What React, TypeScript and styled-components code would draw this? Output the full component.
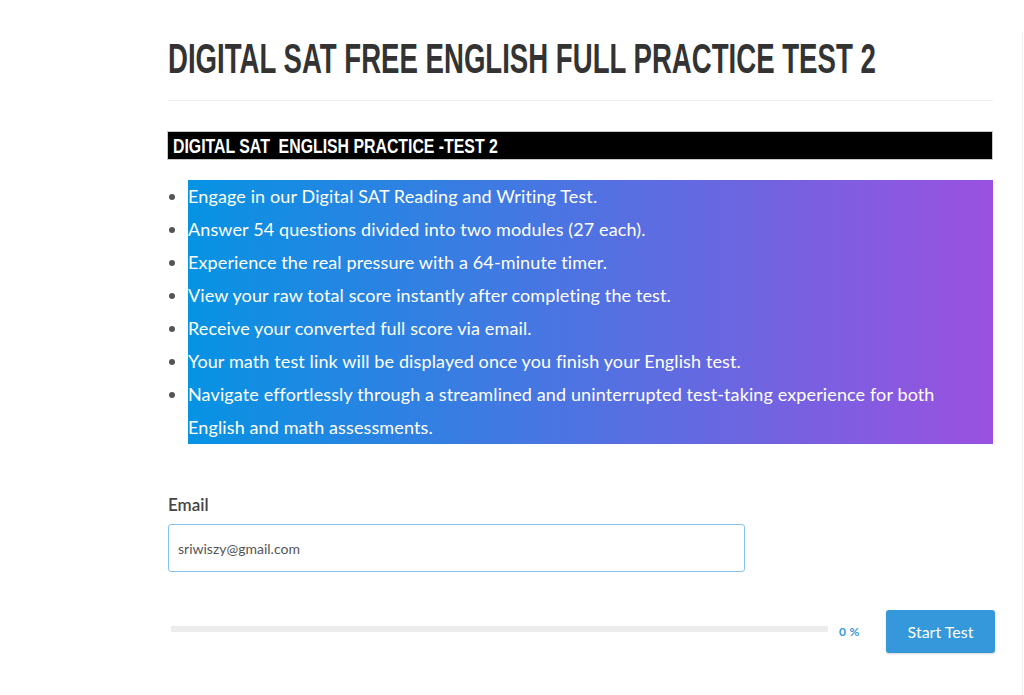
import React from "react";
import styled, { createGlobalStyle } from "styled-components";

const GlobalStyle = createGlobalStyle`
  html, body {
    margin: 0;
    padding: 0;
    background: #ffffff;
  }
  body {
    font-family: Lato, "Open Sans", "Liberation Sans", sans-serif;
    color: #555555;
    overflow: hidden;
  }
  * { box-sizing: border-box; }
`;

const Page = styled.div`
  display: flex;
  min-height: 100vh;
`;

const Main = styled.main`
  width: 825px;
  margin-left: 168px;
  flex: none;
`;

const Sidebar = styled.aside`
  margin-left: 29px;
  margin-top: 32px;
  border-left: 1px solid #efefef;
  flex: 1;
`;

const Header = styled.header`
  padding-top: 39px;
  padding-bottom: 12px;
  border-bottom: 1px solid #eeeeee;
`;

/* Tall condensed display type: narrow size, stretched vertically around the baseline */
const Tall = styled.span<{ $stretch: number; $baseline: number }>`
  display: inline-block;
  white-space: nowrap;
  transform: scaleY(${(p) => p.$stretch});
  transform-origin: 0 ${(p) => p.$baseline}px;
`;

const Title = styled.h1`
  margin: 0;
  font-family: "Liberation Sans", Arial, sans-serif;
  font-weight: 700;
  font-size: 27.6px;
  line-height: 49px;
  color: #333333;
  white-space: nowrap;
`;

const Content = styled.section`
  padding-top: 30px;
`;

const SectionBar = styled.h2`
  margin: 0 0 0 -1px;
  background: #000000;
  border: 1px solid #c8c8c8;
  padding: 5px 5px 0;
  font-family: "Liberation Sans", Arial, sans-serif;
  font-weight: 700;
  font-size: 15.85px;
  line-height: 22px;
  color: #ffffff;
  white-space: nowrap;
`;

const FeatureList = styled.ul`
  margin: 20px 0 0 20px;
  padding: 0;
  background: linear-gradient(90deg, #0693e3 0%, #9b51e0 100%);
`;

const Feature = styled.li`
  list-style: disc outside;
  font-size: 18px;
  letter-spacing: 0.12px;
  line-height: 33px;
  color: #ffffff;

  &::marker {
    color: #555555;
  }
`;

const Form = styled.form`
  margin-top: 49px;
  display: flex;
  flex-direction: column;
`;

const Label = styled.label`
  font-size: 17px;
  line-height: 24px;
  font-weight: 600;
  color: #454545;
`;

const EmailInput = styled.input`
  margin-top: 7px;
  width: 577px;
  height: 48px;
  padding: 0 9px;
  border: 1px solid #86c2ea;
  border-radius: 3px;
  font-family: Lato, "Open Sans", sans-serif;
  font-size: 14px;
  color: #555555;
  background: #ffffff;
  outline: none;
`;

const ActionRow = styled.div`
  margin-top: 38px;
  width: 827px;
  display: flex;
  align-items: center;
`;

const ProgressTrack = styled.div`
  flex: 1;
  margin-left: 3px;
  margin-bottom: 6px;
  height: 6px;
  background: #ececec;
`;

const Percent = styled.span`
  margin-left: 11px;
  width: 20px;
  font-size: 12px;
  font-weight: 700;
  letter-spacing: 0.3px;
  color: #3b97d8;
  white-space: nowrap;
`;

const StartButton = styled.button`
  margin-left: 27px;
  width: 109px;
  height: 43px;
  border: none;
  border-radius: 3px;
  background: #3498db;
  box-shadow: 0 1px 2px rgba(0, 0, 0, 0.18);
  color: #ffffff;
  font-family: Lato, "Open Sans", sans-serif;
  font-size: 16px;
  cursor: pointer;
`;

const features = [
  "Engage in our Digital SAT Reading and Writing Test.",
  "Answer 54 questions divided into two modules (27 each).",
  "Experience the real pressure with a 64-minute timer.",
  "View your raw total score instantly after completing the test.",
  "Receive your converted full score via email.",
  "Your math test link will be displayed once you finish your English test.",
  "Navigate effortlessly through a streamlined and uninterrupted test-taking experience for both English and math assessments.",
];

export default function App() {
  return (
    <>
      <GlobalStyle />
      <Page>
        <Main>
          <Header>
            <Title>
              <Tall $stretch={1.52} $baseline={34}>
                DIGITAL SAT FREE ENGLISH FULL PRACTICE TEST 2
              </Tall>
            </Title>
          </Header>
          <Content>
            <SectionBar>
              <Tall $stretch={1.32} $baseline={16.5}>
                DIGITAL SAT&nbsp; ENGLISH PRACTICE -TEST 2
              </Tall>
            </SectionBar>
            <FeatureList>
              {features.map((f) => (
                <Feature key={f}>{f}</Feature>
              ))}
            </FeatureList>
            <Form onSubmit={(e) => e.preventDefault()}>
              <Label htmlFor="email">Email</Label>
              <EmailInput id="email" type="email" defaultValue="sriwiszy@gmail.com" readOnly />
              <ActionRow>
                <ProgressTrack />
                <Percent>0 %</Percent>
                <StartButton type="button">Start Test</StartButton>
              </ActionRow>
            </Form>
          </Content>
        </Main>
        <Sidebar />
      </Page>
    </>
  );
}
